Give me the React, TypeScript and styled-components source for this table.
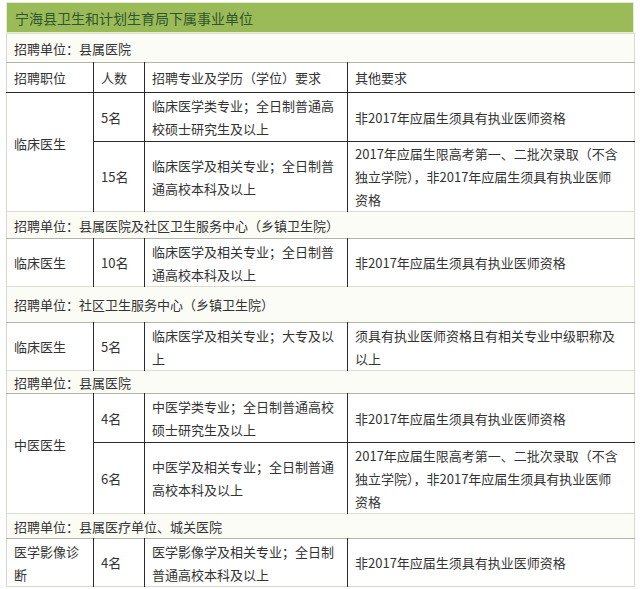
import styled, { createGlobalStyle } from "styled-components";

const GlobalStyle = createGlobalStyle`
  body {
    margin: 0;
    background: #ffffff;
    font-family: "Noto Sans CJK SC", "Noto Sans", sans-serif;
    color: #333333;
  }
`;

interface JobRow {
  count: string;
  major: string[];
  other: string[];
  h: number;
}

interface Job {
  title: string[];
  rows: JobRow[];
}

interface Section {
  unit: string;
  bandH: number;
  withHead?: boolean;
  jobs: Job[];
}

const NON_2017 = ["非2017年应届生须具有执业医师资格"];
const LIMIT_2017 = [
  "2017年应届生限高考第一、二批次录取（不含",
  "独立学院），非2017年应届生须具有执业医师",
  "资格",
];

const sections: Section[] = [
  {
    unit: "招聘单位：县属医院",
    bandH: 29,
    withHead: true,
    jobs: [
      {
        title: ["临床医生"],
        rows: [
          { count: "5名", major: ["临床医学类专业；全日制普通高", "校硕士研究生及以上"], other: NON_2017, h: 49 },
          { count: "15名", major: ["临床医学及相关专业；全日制普", "通高校本科及以上"], other: LIMIT_2017, h: 70 },
        ],
      },
    ],
  },
  {
    unit: "招聘单位：县属医院及社区卫生服务中心（乡镇卫生院）",
    bandH: 27,
    jobs: [
      {
        title: ["临床医生"],
        rows: [
          { count: "10名", major: ["临床医学及相关专业；全日制普", "通高校本科及以上"], other: NON_2017, h: 48 },
        ],
      },
    ],
  },
  {
    unit: "招聘单位：社区卫生服务中心（乡镇卫生院）",
    bandH: 36,
    jobs: [
      {
        title: ["临床医生"],
        rows: [
          {
            count: "5名",
            major: ["临床医学及相关专业；大专及以", "上"],
            other: ["须具有执业医师资格且有相关专业中级职称及", "以上"],
            h: 48,
          },
        ],
      },
    ],
  },
  {
    unit: "招聘单位：县属医院",
    bandH: 23,
    jobs: [
      {
        title: ["中医医生"],
        rows: [
          { count: "4名", major: ["中医学类专业；全日制普通高校", "硕士研究生及以上"], other: NON_2017, h: 49 },
          { count: "6名", major: ["中医学及相关专业；全日制普通", "高校本科及以上"], other: LIMIT_2017, h: 71 },
        ],
      },
    ],
  },
  {
    unit: "招聘单位：县属医疗单位、城关医院",
    bandH: 25,
    jobs: [
      {
        title: ["医学影像诊", "断"],
        rows: [
          { count: "4名", major: ["医学影像学及相关专业；全日制", "普通高校本科及以上"], other: NON_2017, h: 48 },
        ],
      },
    ],
  },
];

const Lines = ({ lines }: { lines: string[] }) => (
  <>
    {lines.map((line, i) => (
      <span key={i}>
        {i > 0 && <br />}
        {line}
      </span>
    ))}
  </>
);

const App = () => {
  return (
    <>
      <GlobalStyle />
      <Page>
        <Title>宁海县卫生和计划生育局下属事业单位</Title>
        <Table>
          <colgroup>
            <col style={{ width: 87 }} />
            <col style={{ width: 51 }} />
            <col style={{ width: 203 }} />
            <col style={{ width: 287 }} />
          </colgroup>
          <tbody>
            {sections.map((section, si) => (
              <SectionRows key={si} section={section} />
            ))}
          </tbody>
        </Table>
      </Page>
    </>
  );
};

const SectionRows = ({ section }: { section: Section }) => {
  return (
    <>
      <BandRow $h={section.bandH}>
        <BandCell colSpan={4}>{section.unit}</BandCell>
      </BandRow>
      {section.withHead && (
        <DataRow $h={30}>
          <Cell $top="light" $right>招聘职位</Cell>
          <Cell $top="light" $right>人数</Cell>
          <Cell $top="light" $right>招聘专业及学历（学位）要求</Cell>
          <Cell $top="light">其他要求</Cell>
        </DataRow>
      )}
      {section.jobs.map((job, ji) =>
        job.rows.map((row, ri) => {
          const top = ri === 0 && !section.withHead ? "light" : "dark";
          return (
            <DataRow key={`${ji}-${ri}`} $h={row.h}>
              {ri === 0 && (
                <TitleCell rowSpan={job.rows.length} $top={top} $right $lift={job.rows.length > 1}>
                  <Lines lines={job.title} />
                </TitleCell>
              )}
              <Cell $top={top} $right>
                {row.count}
              </Cell>
              <Cell $top={top} $right>
                <Lines lines={row.major} />
              </Cell>
              <Cell $top={top}>
                <Lines lines={row.other} />
              </Cell>
            </DataRow>
          );
        })
      )}
    </>
  );
};

const Page = styled.div`
  width: 628px;
  margin: 2px 0 0 6px;
`;

const Title = styled.div`
  height: 31px;
  line-height: 31px;
  padding-left: 8px;
  background: #9bbb59;
  color: #2f5530;
  font-size: 14px;
  border: 1px solid #e4ecd2;
  box-sizing: border-box;
`;

const Table = styled.table`
  width: 628px;
  border-collapse: collapse;
  table-layout: fixed;
  font-size: 13px;
  border-left: 1px solid #d8d8cc;
  border-right: 1px solid #d8d8cc;
  border-bottom: 1px solid #d8d8cc;
`;

const BandRow = styled.tr<{ $h: number }>`
  height: ${p => p.$h}px;
  background: #fcfcf6;
`;

const BandCell = styled.td`
  padding: 0 7px;
  border-top: 1px solid #dcdccf;
  vertical-align: middle;
  white-space: nowrap;
`;

const DataRow = styled.tr<{ $h: number }>`
  height: ${p => p.$h}px;
  background: #ffffff;
`;

const Cell = styled.td<{ $top: "light" | "dark"; $right?: boolean }>`
  padding: 0 0 0 7px;
  line-height: 23px;
  vertical-align: middle;
  white-space: nowrap;
  border-top: 1px solid ${p => (p.$top === "dark" ? "#2a2a2a" : "#b4b4aa")};
  border-right: ${p => (p.$right ? "1px solid #2a2a2a" : "none")};
`;

const TitleCell = styled(Cell)<{ $lift?: boolean }>`
  padding-bottom: ${p => (p.$lift ? "18px" : "0")};
`;

export default App;
